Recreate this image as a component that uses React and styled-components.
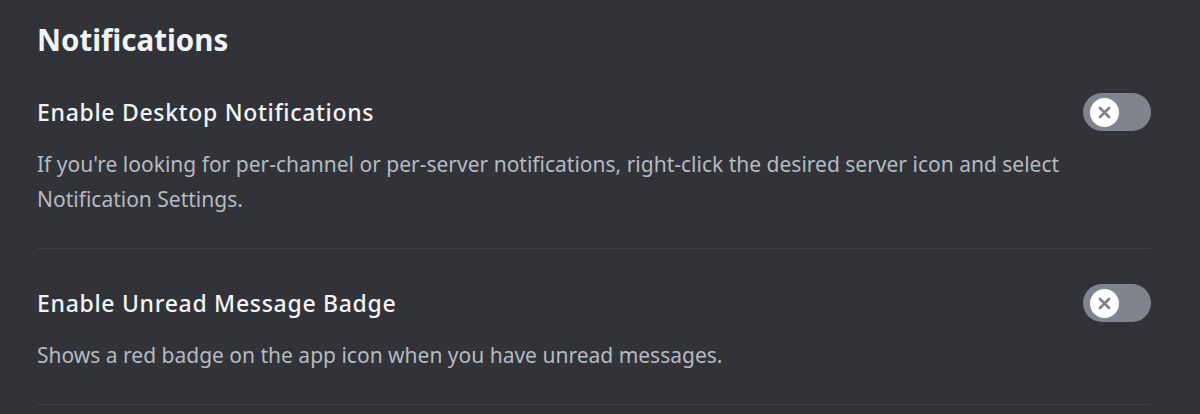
import React from "react";
import styled, { createGlobalStyle } from "styled-components";

const Global = createGlobalStyle`
  html, body { margin: 0; padding: 0; background: #313338; }
  body { font-family: "Noto Sans", "Open Sans", sans-serif; -webkit-font-smoothing: antialiased; }
`;

const Page = styled.div`
  width: 1200px;
  height: 414px;
  box-sizing: border-box;
  padding: 22px 49px 0 37px;
  background: #313338;
  overflow: hidden;
`;

const Heading = styled.h2`
  margin: 0 0 34px;
  font-size: 29.5px;
  line-height: 36px;
  font-weight: 700;
  color: #f2f3f5;
`;

const Section = styled.section`
  display: flex;
  flex-direction: column;
  padding-top: ${(p) => (p.$first ? "0" : "34px")};
  padding-bottom: 31px;
  border-bottom: 1px solid #3f4147;
`;

const Row = styled.div`
  display: flex;
  align-items: center;
  justify-content: space-between;
  height: 40px;
`;

const Title = styled.div`
  font-size: 23px;
  letter-spacing: 0.7px;
  font-weight: 500;
  color: #f2f3f5;
`;

const Desc = styled.div`
  margin-top: 15px;
  font-size: 21px;
  line-height: 35px;
  color: #b5bac1;
`;

const Track = styled.div`
  width: 68px;
  height: 38px;
  border-radius: 19px;
  background: #80848e;
  display: flex;
  align-items: center;
  padding: 0 5px;
  box-sizing: border-box;
  flex-shrink: 0;
`;

const Knob = styled.div`
  width: 29px;
  height: 29px;
  border-radius: 50%;
  background: #ffffff;
  display: flex;
  align-items: center;
  justify-content: center;
  margin-left: 2px;
`;

function Toggle() {
  return (
    <Track>
      <Knob>
        <svg width="13" height="13" viewBox="0 0 13 13">
          <path d="M2 2 L11 11 M11 2 L2 11" stroke="#80848e" strokeWidth="2.8" strokeLinecap="round" />
        </svg>
      </Knob>
    </Track>
  );
}

function Setting({ title, desc, first }) {
  return (
    <Section $first={first}>
      <Row>
        <Title>{title}</Title>
        <Toggle />
      </Row>
      <Desc>{desc}</Desc>
    </Section>
  );
}

export default function App() {
  return (
    <>
      <Global />
      <Page>
        <Heading>Notifications</Heading>
        <Setting
          first
          title="Enable Desktop Notifications"
          desc="If you're looking for per-channel or per-server notifications, right-click the desired server icon and select Notification Settings."
        />
        <Setting
          title="Enable Unread Message Badge"
          desc="Shows a red badge on the app icon when you have unread messages."
        />
      </Page>
    </>
  );
}
